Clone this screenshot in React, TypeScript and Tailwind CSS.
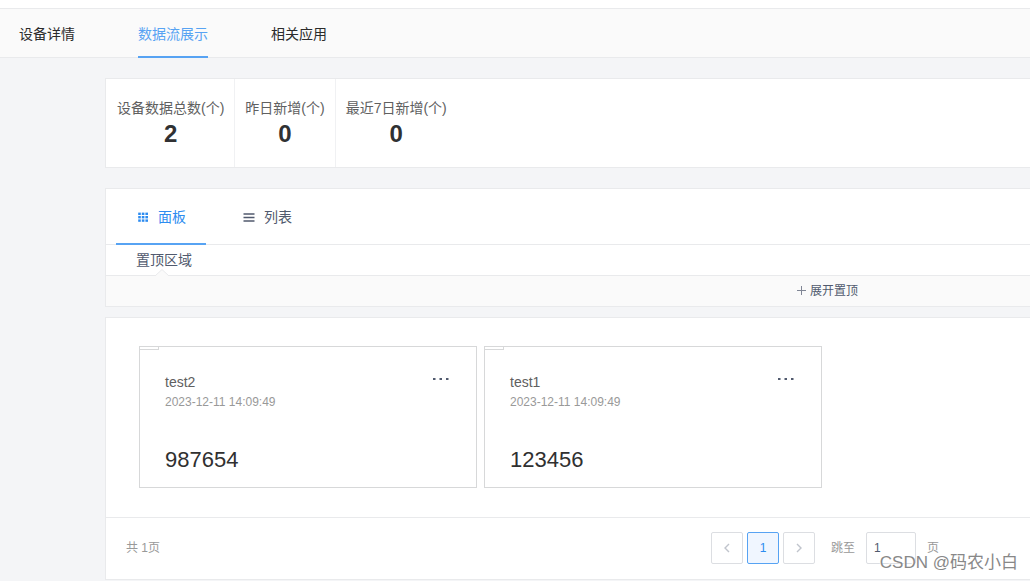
import { useState } from "react";

const navItems = ["设备详情", "数据流展示", "相关应用"];

const stats = [
  { label: "设备数据总数(个)", value: 2 },
  { label: "昨日新增(个)", value: 0 },
  { label: "最近7日新增(个)", value: 0 },
];

const streams = [
  { name: "test2", time: "2023-12-11 14:09:49", value: "987654" },
  { name: "test1", time: "2023-12-11 14:09:49", value: "123456" },
];

function GridIcon() {
  return (
    <svg viewBox="0 0 14 14" className="h-3.5 w-3.5" fill="currentColor" aria-hidden="true">
      {[2.6, 6, 9.4].map((y) =>
        [2.2, 5.8, 9.4].map((x) => <rect key={`${x}-${y}`} x={x} y={y} width="2.6" height="2.4" />),
      )}
    </svg>
  );
}

function ListIcon() {
  return (
    <svg viewBox="0 0 14 14" className="h-3.5 w-3.5" stroke="currentColor" aria-hidden="true">
      <path d="M1.5 4h11M1.5 7.5h11M1.5 11h11" strokeWidth="1.3" />
    </svg>
  );
}

function TopNav() {
  const [active, setActive] = useState(1);
  return (
    <nav className="mt-2 flex h-[50px] gap-[63px] border-y border-[#e9eaec] bg-[#fafafa] pl-[19px]">
      {navItems.map((item, i) => (
        <button
          key={item}
          type="button"
          onClick={() => setActive(i)}
          className={
            i === active
              ? "-mb-px border-b-2 border-[#57a3f3] pt-0.5 text-[#57a3f3]"
              : "-mb-px border-b-2 border-transparent pt-0.5 text-[#2b2b2b]"
          }
        >
          {item}
        </button>
      ))}
    </nav>
  );
}

function Stats() {
  return (
    <section className="flex h-[90px] border border-r-0 border-[#e9eaec] bg-white pl-px">
      {stats.map((s) => (
        <div key={s.label} className="border-r border-[#f0f1f3] px-2.5 pt-[19px] text-center last:border-r-0">
          <div className="leading-5 text-[#606060]">{s.label}</div>
          <div className="text-2xl font-bold leading-8 text-[#303133]">{s.value}</div>
        </div>
      ))}
    </section>
  );
}

function ViewPanel() {
  const [view, setView] = useState("面板");
  const tabs = [
    { name: "面板", icon: <GridIcon /> },
    { name: "列表", icon: <ListIcon /> },
  ];
  return (
    <section className="border border-r-0 border-[#e9eaec] bg-white">
      <div className="flex h-14 gap-4 border-b border-[#e9eaec] pl-2.5">
        {tabs.map((t) => (
          <button
            key={t.name}
            type="button"
            onClick={() => setView(t.name)}
            className={
              view === t.name
                ? "-mb-px flex items-center gap-2 border-b-2 border-[#57a3f3] px-5 pt-px text-[#2d8cf0]"
                : "-mb-px flex items-center gap-2 border-b-2 border-transparent px-5 pt-px text-[#515a6e]"
            }
          >
            {t.icon}
            {t.name}
          </button>
        ))}
      </div>
      <h2 className="relative h-[30px] pl-[30px] leading-[30px] text-[#515a6e]">
        置顶区域
        <svg viewBox="0 0 14 7" className="absolute -bottom-px left-[49px] h-[7px] w-3.5" aria-hidden="true">
          <path d="M0 7L7 .5L14 7" fill="#fafafa" stroke="#e9eaec" />
        </svg>
      </h2>
      <div className="flex h-[31px] justify-end border-t border-[#e9eaec] bg-[#fafafa] pr-[172px]">
        <button type="button" className="flex items-center gap-1 text-xs text-[#515a6e]">
          <svg viewBox="0 0 10 10" className="h-2.5 w-2.5" stroke="#808695" aria-hidden="true">
            <path d="M5.5 0v9M1 4.5h9" />
          </svg>
          展开置顶
        </button>
      </div>
    </section>
  );
}

function StreamCard({ name, time, value }: { name: string; time: string; value: string }) {
  return (
    <article className="relative h-[142px] w-[338px] border border-[#d7d8d9] px-[25px] pt-[25px]">
      <span className="absolute left-0 top-0 h-[3px] w-[19px] border-b border-r border-[#d7d8d9]" />
      <div className="flex justify-between">
        <h3 className="leading-5 text-[#606060]">{name}</h3>
        <button type="button" aria-label="更多" className="flex h-3.5 w-5 items-center justify-center text-[#515a6e]">
          <svg viewBox="0 0 16 2" className="h-0.5 w-4" fill="currentColor" aria-hidden="true">
            <rect width="2.5" height="2" />
            <rect x="6.5" width="2.5" height="2" />
            <rect x="13" width="2.5" height="2" />
          </svg>
        </button>
      </div>
      <p className="text-xs leading-5 text-[#999]">{time}</p>
      <p className="pt-8 text-[22px] leading-8 text-[#303030]">{value}</p>
    </article>
  );
}

function Pagination() {
  const [page, setPage] = useState("1");
  const arrow = "flex h-8 w-8 items-center justify-center rounded-xs border border-[#dcdee2] text-[#c0c4cc]";
  return (
    <footer className="flex h-[62px] items-center justify-between border-t border-[#e9eaec] pb-px pl-5 pr-[91px] text-xs text-[#999]">
      <span>共 1页</span>
      <div className="flex items-center gap-1">
        <button type="button" aria-label="上一页" className={arrow}>
          <svg viewBox="0 0 10 10" className="h-2.5 w-2.5" fill="none" stroke="currentColor" strokeWidth="1.4">
            <path d="M7 1L3 5l4 4" />
          </svg>
        </button>
        <button
          type="button"
          aria-current="page"
          className="h-8 w-8 rounded-xs border border-[#57a3f3] bg-[#f0f6ff] text-[#2d8cf0]"
        >
          1
        </button>
        <button type="button" aria-label="下一页" className={arrow}>
          <svg viewBox="0 0 10 10" className="h-2.5 w-2.5" fill="none" stroke="currentColor" strokeWidth="1.4">
            <path d="M3 1l4 4-4 4" />
          </svg>
        </button>
        <label className="flex items-center pl-3">
          跳至
          <input
            value={page}
            onChange={(e) => setPage(e.target.value)}
            className="mx-[11px] h-8 w-[50px] rounded-xs border border-[#dcdee2] bg-white px-[7px] text-[#515a6e]"
          />
          页
        </label>
      </div>
    </footer>
  );
}

export default function App() {
  return (
    <div className="relative min-h-screen overflow-hidden bg-white font-['Liberation_Sans','Noto_Sans_CJK_SC',sans-serif] text-sm">
      <TopNav />
      <main className="flex min-h-[523px] flex-col bg-[#f4f5f7] pl-[105px] pt-5">
        <Stats />
        <div className="pt-5">
          <ViewPanel />
        </div>
        <section className="mt-2.5 border border-r-0 border-[#e9eaec] bg-white">
          <div className="flex flex-wrap gap-[7px] px-[33px] pb-[29px] pt-7">
            {streams.map((s) => (
              <StreamCard key={s.name} {...s} />
            ))}
          </div>
          <Pagination />
        </section>
      </main>
      <div className="pointer-events-none absolute bottom-1.5 right-3 text-[17px] leading-6 text-[#888] [text-shadow:-1px_-1px_0_#fff]">
        CSDN @码农小白
      </div>
    </div>
  );
}
